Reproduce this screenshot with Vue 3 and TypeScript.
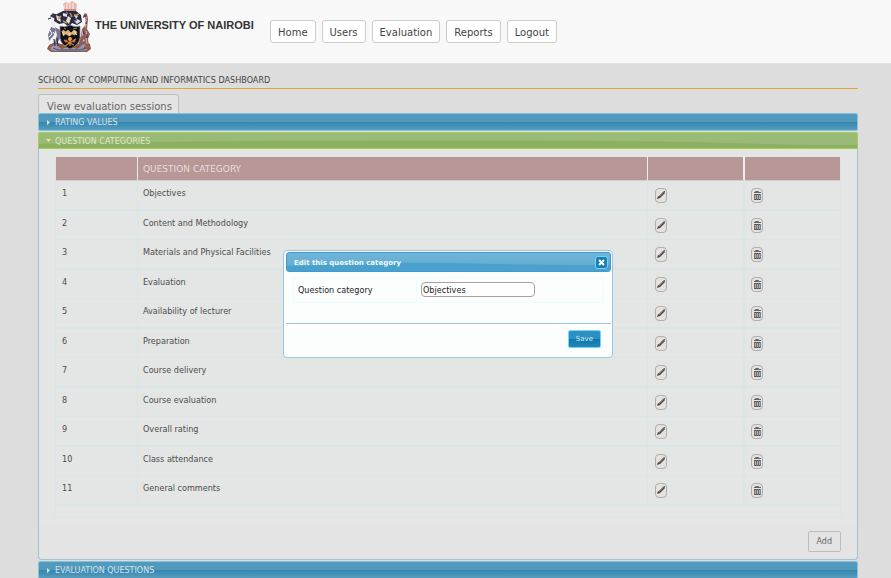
<script setup lang="ts">
import { ref } from 'vue'

interface Category {
  id: number
  name: string
}

const navItems: string[] = ['Home', 'Users', 'Evaluation', 'Reports', 'Logout']

const categories = ref<Category[]>(
  [
    'Objectives',
    'Content and Methodology',
    'Materials and Physical Facilities',
    'Evaluation',
    'Availability of lecturer',
    'Preparation',
    'Course delivery',
    'Course evaluation',
    'Overall rating',
    'Class attendance',
    'General comments',
  ].map((name, index) => ({ id: index + 1, name })),
)

const editing = ref<Category | null>(categories.value[0])
const draft = ref<string>(categories.value[0].name)

function openEditor(category: Category): void {
  editing.value = category
  draft.value = category.name
}

function closeEditor(): void {
  editing.value = null
}

function save(): void {
  if (editing.value) editing.value.name = draft.value
  closeEditor()
}

function remove(category: Category): void {
  categories.value = categories.value.filter((item) => item.id !== category.id)
}
</script>

<template>
  <div class="page">
    <header class="masthead">
      <svg class="crest" viewBox="0 0 46 51" aria-hidden="true">
        <!-- ground and scroll -->
        <path d="M3 44 9 41 15 43 31 43 38 40 44 43 45 48 41 51H5L1 48Z" fill="#8a604b" />
        <path d="M4 45l6-2 4 4h19l4-4 6 2-2 4-6 1H10l-5-1z" fill="#9099b7" />
        <path d="M7 47l5 2h22l6-2" fill="none" stroke="#484969" stroke-width="1" />
        <path d="M2 47l5-3M13 45l4 3m13 0 4-4m4 2 5 2" stroke="#a54b38" stroke-width="1.4" />
        <!-- crane -->
        <path d="M5 17l3-2 2 3-1 9 5 4-1 6-5 3-5-4 3-5z" fill="#eeecef" />
        <path d="M5 26l-3 8 1 6 5-6 2-6zM9 26l5 3 1 7-4 6-2-1 2-7z" fill="#77768f" />
        <path d="M5 17 2 18M5 15l2-2 3 1-1 3zM8 38l1 7M11 37l1 8" stroke="#33304a" stroke-width="1.2" fill="#4b354d" />
        <path d="M4 29l2 4-3 3M7 31l3 4-3 3" fill="none" stroke="#fff" stroke-width="1" />
        <!-- giraffe -->
        <path d="M37 15l2-3 2 1 1 5-1 10 3 5-2 5 1 8-3 1-2-9-4 8-3-1 4-10 1-7 4-5-1-7-2 1z" fill="#8b5d5d" />
        <path d="M40 16v4m0 3-1 4m1 3 1 5m-4-5-1 5m4 2 1 6m-7-5-2 5" stroke="#e1b5a7" stroke-width="1" />
        <path d="M39 14v2m1 5v2m-3 7 1 3m3 0v4" stroke="#462b37" stroke-width="1" />
        <!-- crown -->
        <path d="M17 3l3-2 3 1 3-2 3 2 2 1-1 7H18z" fill="#e6b5ac" />
        <path d="M18 4v6m3-8v8m3-9v9m3-8v8" stroke="#fff3ec" stroke-width="1" />
        <path d="M18 9h12" stroke="#bd675c" stroke-width="1.3" />
        <!-- helm and plumes -->
        <path d="M17 10h13l5 4 1 7-5 3-5-2-3 4-5-4-5 1-5-3 1-6 4-2z" fill="#272b43" />
        <path d="M10 14l4 2 1 5-4-2zM17 12l4 1v3l-4-1zM22 15l3 2-2 6-3-3zM28 13l4 2-2 3zM31 18l4 2-4 3-2-2z" fill="#e8dfda" />
        <path d="M12 18l3-3m9-3 2 4m-9 4 4 2m7-7 5-2" stroke="#c29559" stroke-width="1.5" />
        <path d="M20 11l2 2m6 7 3-1" stroke="#5d7592" stroke-width="1.5" />
        <!-- shield -->
        <path d="M14 25q5 2 10-1 5 3 10 1v12q-1 7-10 11-9-4-10-11z" fill="#111014" stroke="#8b8792" stroke-width=".8" />
        <path d="M17 29l3 2 2-2 3 3 3-3 3 2-2 3-3-1-3 2-3-2-3 1zM18 27l2 1m7 0 4-1" fill="#ddb67c" stroke="#e0b77e" stroke-width=".7" />
        <path d="M16 30l2 5m5-3 1 3m4-5 3 4" stroke="#f7e0ad" stroke-width="1" />
        <path d="M24 36v9m-6-6 10 5m2-6-11 7" stroke="#d98542" stroke-width="1.2" />
        <circle cx="24" cy="38" r="2" fill="#e8a04f" />
        <circle cx="20" cy="40" r="1.5" fill="#cc713d" />
        <circle cx="28" cy="40" r="1.5" fill="#cc713d" />
      </svg>
      <strong class="brand">THE UNIVERSITY OF NAIROBI</strong>
      <nav class="nav">
        <a v-for="item in navItems" :key="item" href="#" class="nav-link">{{ item }}</a>
      </nav>
    </header>

    <main class="content">
      <h1 class="title">SCHOOL OF COMPUTING AND INFORMATICS DASHBOARD</h1>
      <a href="#" class="tab">View evaluation sessions</a>

      <button type="button" class="bar">
        <svg class="arrow" viewBox="0 0 5 5" aria-hidden="true"><path d="M1 0l3 2.500L1 5z" fill="currentColor" /></svg>
        RATING VALUES
      </button>
      <button type="button" class="bar bar-open" aria-expanded="true">
        <svg class="wave" viewBox="0 0 820 15" preserveAspectRatio="none" aria-hidden="true">
          <path d="M0 11C180 7 400 7 560 8S700 12 820 12V15H0z" fill="#8bb05f" />
        </svg>
        <svg class="arrow" viewBox="0 0 5 5" aria-hidden="true"><path d="M0 1h5L2.500 4z" fill="currentColor" /></svg>
        <span class="bar-text">QUESTION CATEGORIES</span>
      </button>

      <section class="panel">
        <div class="panel-body">
          <table class="grid">
            <colgroup>
              <col class="col-number" />
              <col />
              <col class="col-edit" />
              <col class="col-delete" />
            </colgroup>
            <thead>
              <tr>
                <th></th>
                <th>QUESTION CATEGORY</th>
                <th></th>
                <th></th>
              </tr>
            </thead>
            <tbody>
              <tr v-for="category in categories" :key="category.id">
                <td>{{ category.id }}</td>
                <td>{{ category.name }}</td>
                <td>
                  <button type="button" class="icon-button" aria-label="Edit" @click="openEditor(category)">
                    <svg viewBox="0 0 10 11" aria-hidden="true">
                      <path d="M1 9l1-3 2 2zM2 7l5-5 2 1-5 5z" fill="#4b4643" />
                      <path d="M7 2l1-1 1 0 0 1-1 2z" fill="#536b83" />
                      <path d="M3 7l4-4" stroke="#a48060" stroke-width=".7" />
                    </svg>
                  </button>
                </td>
                <td>
                  <button type="button" class="icon-button" aria-label="Delete" @click="remove(category)">
                    <svg viewBox="0 0 10 11" aria-hidden="true">
                      <path d="M3.500 2.500V1.500h3v1M2 2.500h7" fill="none" stroke="#666" stroke-width="1" />
                      <path d="M2 4h7v6H2z" fill="#b5b1ae" />
                      <path d="M2 4.500h7M2 9.500h7" stroke="#4d4d4d" stroke-width="1" />
                      <path d="M2.500 4v6" stroke="#8f6656" stroke-width="1" />
                      <path d="M4.500 4v6" stroke="#7a6a5e" stroke-width="1" />
                      <path d="M6.500 4v6" stroke="#5f7480" stroke-width="1" />
                      <path d="M8.500 4v6" stroke="#5f8cae" stroke-width="1" />
                    </svg>
                  </button>
                </td>
              </tr>
            </tbody>
            <tfoot>
              <tr>
                <td colspan="4"></td>
              </tr>
            </tfoot>
          </table>
        </div>
        <footer class="panel-footer">
          <button type="button" class="add">Add</button>
        </footer>
      </section>

      <button type="button" class="bar">
        <svg class="arrow" viewBox="0 0 5 5" aria-hidden="true"><path d="M1 0l3 2.500L1 5z" fill="currentColor" /></svg>
        EVALUATION QUESTIONS
      </button>
    </main>

    <div v-if="editing" class="overlay">
      <form class="dialog" role="dialog" aria-labelledby="dialog-title" @submit.prevent="save">
        <header class="dialog-header">
          <svg class="wave" viewBox="0 0 324 18" preserveAspectRatio="none" aria-hidden="true">
            <path d="M0 13C80 11 110 9 160 10S260 12 324 12V18H0z" fill="#48a2cc" />
          </svg>
          <h2 id="dialog-title" class="dialog-title">Edit this question category</h2>
          <button type="button" class="close" aria-label="Close" @click="closeEditor">
            <svg viewBox="0 0 7 7" aria-hidden="true"><path d="M1 1l5 5M6 1L1 6" stroke="#fff" stroke-width="2" /></svg>
          </button>
        </header>
        <div class="field">
          <label for="category-name" class="field-label">Question category</label>
          <div class="field-value">
            <input id="category-name" v-model="draft" type="text" class="field-input" />
          </div>
        </div>
        <footer class="dialog-footer">
          <button type="submit" class="save">Save</button>
        </footer>
      </form>
    </div>
  </div>
</template>

<style>
body {
  background: #dddddd;
}
</style>

<style scoped>
.page,
.page * {
  box-sizing: border-box;
}

.page {
  position: relative;
  font-family: 'DejaVu Sans', Verdana, sans-serif;
  color: #4c4c4c;
}

button,
input {
  font-family: inherit;
  margin: 0;
}

.masthead {
  display: flex;
  align-items: flex-start;
  height: 64px;
  padding: 0 46px;
  background: #f8f8f8;
  border-bottom: 1px solid #e2e2e2;
}

.crest {
  flex: none;
  width: 46px;
  height: 51px;
  margin-top: 1px;
}

.brand {
  flex: none;
  width: 178px;
  padding-left: 3px;
  margin-top: 18px;
  font: bold 11px/14px 'Liberation Sans', Arial, sans-serif;
  color: #333333;
  white-space: nowrap;
}

.nav {
  display: flex;
  gap: 6px;
  margin-top: 20px;
}

.nav-link {
  height: 23px;
  padding: 0 7px;
  border: 1px solid #cccccc;
  border-radius: 3px;
  background: #ffffff;
  color: #444444;
  font-size: 10px;
  line-height: 24px;
  text-decoration: none;
}

.content {
  padding: 10px 33px 0 38px;
}

.title {
  margin: 0 0 5px;
  padding-bottom: 2px;
  border-bottom: 1px solid #e5a634;
  font: 9px/12px 'DejaVu Sans Condensed', 'DejaVu Sans', sans-serif;
  color: #444444;
}

.tab {
  display: block;
  width: fit-content;
  height: 19px;
  padding: 0 6px 0 8px;
  border: 1px solid #c0c0c0;
  border-bottom: 0;
  border-radius: 3px 3px 0 0;
  background: #e4e4e4;
  color: #666666;
  font-size: 10px;
  line-height: 24px;
  text-decoration: none;
}

.bar {
  position: relative;
  display: flex;
  align-items: center;
  gap: 4px;
  width: 100%;
  height: 18px;
  padding: 2px 7px 0;
  border: 1px solid #7fc4dd;
  border-radius: 2px;
  background: linear-gradient(#5199bd 0 50%, #3486b0 50%, #579dbd);
  color: #d5e3e9;
  font-size: 8px;
  line-height: 10px;
  text-align: left;
}

.bar-open {
  margin-top: 1px;
  height: 17px;
  border-color: #a9cb55;
  border-radius: 2px 2px 0 0;
  background: #9aba78;
  color: #e0e8c6;
}

.arrow {
  position: relative;
  flex: none;
  width: 5px;
  height: 5px;
  margin-bottom: 2px;
}

.bar-open .arrow {
  color: #eee790;
}

.bar-text {
  position: relative;
}

.wave {
  position: absolute;
  inset: 0;
  width: 100%;
  height: 100%;
}

.panel {
  margin-bottom: 1px;
  border: 1px solid #a5bfd0;
  border-top: 0;
  border-radius: 0 0 4px 4px;
  background: #e4e4e4;
}

.panel-body {
  padding: 8px 16px 6px;
  background: #e3e6e4;
}

.grid {
  width: 100%;
  border-collapse: separate;
  border-spacing: 0;
  table-layout: fixed;
  border-left: 1px solid #dae5e4;
  font: 9px/12px 'DejaVu Sans Condensed', 'DejaVu Sans', sans-serif;
}

.col-number {
  width: 82px;
}

.col-edit {
  width: 97px;
}

.col-delete {
  width: 96px;
}

th {
  height: 24px;
  padding: 0 5px;
  border-right: 1px solid #e7eeee;
  border-bottom: 1px solid #cfcfcf;
  background: #b89797;
  color: #e8dddd;
  font: 9px/12px 'DejaVu Sans', sans-serif;
  text-align: left;
}

tbody td {
  height: 30px;
  padding: 6px 5px 0;
  border-right: 1px solid #dae5e4;
  border-bottom: 2px solid #d9e6e5;
  vertical-align: top;
}

tbody tr:nth-child(even) td {
  height: 29px;
  border-bottom-width: 1px;
}

th:nth-child(3),
tbody td:nth-child(3) {
  border-right-width: 2px;
}

th:last-child {
  border-right-color: #dae5e4;
}

th:first-child,
tbody td:first-child {
  padding-left: 6px;
}

tbody td:nth-child(n + 3) {
  padding: 7px 7px 0;
}

tbody td:last-child {
  padding-left: 6px;
}

tfoot td {
  height: 12px;
  padding: 0;
  border-right: 1px solid #dae5e4;
  border-bottom: 1px solid #dae5e4;
}

.icon-button {
  display: flex;
  align-items: center;
  justify-content: center;
  width: 12px;
  height: 15px;
  padding: 0;
  border: 1px solid #b3adad;
  border-radius: 4px;
  background: #e4e2e1;
}

.icon-button svg {
  flex: none;
  width: 10px;
  height: 11px;
}

.panel-footer {
  display: flex;
  justify-content: flex-end;
  padding: 7px 16px;
}

.add {
  height: 21px;
  padding: 0 8px;
  border: 1px solid #bdbdbd;
  border-radius: 2px;
  background: #e4e4e4;
  color: #666666;
  font-size: 8px;
}

.overlay {
  position: absolute;
  inset: 0;
  display: flex;
  align-items: flex-start;
  justify-content: center;
  padding: 250px 0 0 5px;
}

.dialog {
  width: 330px;
  padding: 1px 1px 8px 2px;
  border: 1px solid #9cc5e0;
  border-radius: 4px;
  background: #fcfdfd;
}

.dialog-header {
  position: relative;
  display: flex;
  align-items: center;
  justify-content: space-between;
  height: 20px;
  padding: 1px 2px 0 7px;
  border: 1px solid #4297d7;
  border-radius: 3px;
  overflow: hidden;
  background: linear-gradient(#70b5d7, #5daad1);
}

.dialog-title {
  position: relative;
  margin: 0;
  color: #eef8fd;
  font-size: 7px;
  font-weight: bold;
}

.close {
  position: relative;
  display: flex;
  align-items: center;
  justify-content: center;
  width: 13px;
  height: 13px;
  padding: 0;
  border: 1px solid #77d5f7;
  border-radius: 3px;
  background: #187db3;
}

.close svg {
  width: 7px;
  height: 7px;
}

.field {
  display: flex;
  margin: 5px 7px 20px;
  border: 1px solid #eafdff;
  font: 9px/12px 'DejaVu Sans Condensed', 'DejaVu Sans', sans-serif;
  color: #222222;
}

.field-label {
  width: 123px;
  padding: 6px 4px;
  border-right: 1px solid #eafdff;
}

.field-value {
  flex: 1;
  padding: 4px;
}

.field-input {
  display: block;
  width: 114px;
  height: 15px;
  padding: 0 1px;
  border: 1px solid #aaa0a0;
  border-radius: 4px;
  background: #ffffff;
  color: #222222;
  font: inherit;
}

.dialog-footer {
  display: flex;
  justify-content: flex-end;
  padding: 6px 10px 1px;
  border-top: 1px solid #9cc5e0;
}

.save {
  height: 18px;
  padding: 0 7px;
  border: 1px solid #77d5f7;
  border-radius: 2px;
  background: linear-gradient(#2c91c0 0 50%, #0f77ad 50%, #2187b7);
  color: #d9eef8;
  font-size: 7px;
}
</style>
